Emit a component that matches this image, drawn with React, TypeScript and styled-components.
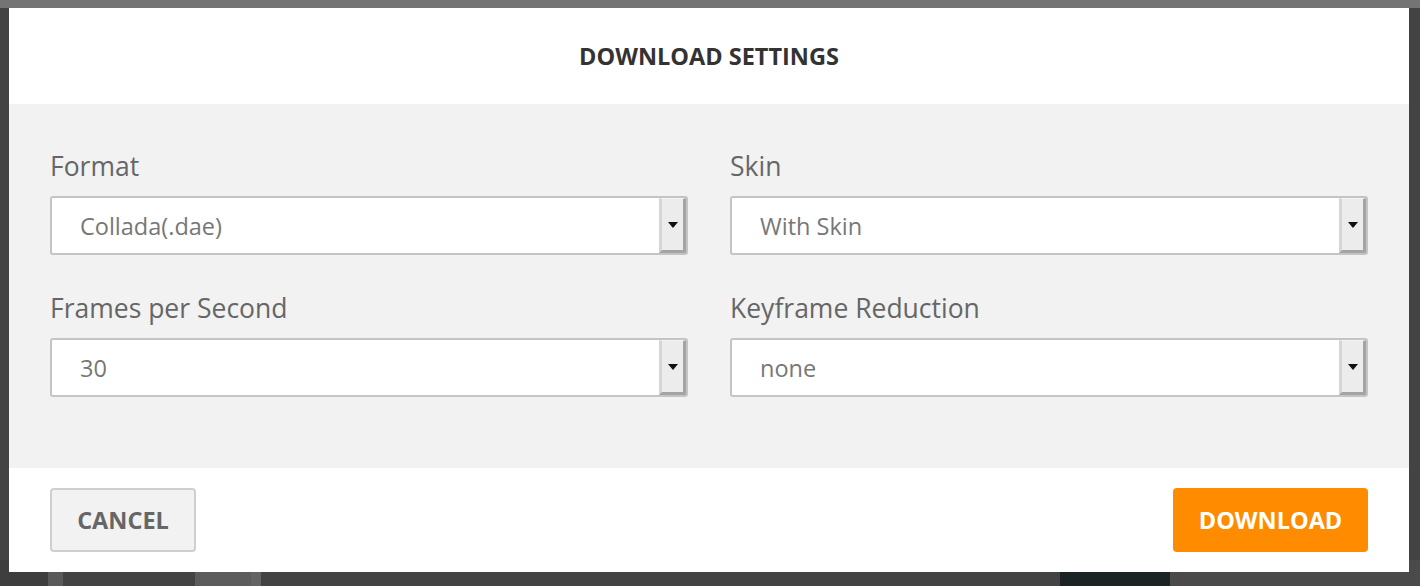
import React from "react";
import styled, { createGlobalStyle } from "styled-components";

const Global = createGlobalStyle`
  html, body { margin: 0; padding: 0; }
  body {
    width: 1420px;
    height: 586px;
    overflow: hidden;
    background: linear-gradient(#747474 0, #747474 8px, #434343 8px);
    font-family: "Open Sans", "Noto Sans", sans-serif;
  }
`;

const Backdrop = styled.div`
  position: relative;
  width: 1420px;
  height: 586px;
  padding: 8px 11px 0 9px;
  box-sizing: border-box;
`;

const Patch = styled.div<{ $l: number; $w: number; $c: string }>`
  position: absolute;
  left: ${(p) => p.$l}px;
  width: ${(p) => p.$w}px;
  top: 560px;
  bottom: 0;
  background: ${(p) => p.$c};
`;

const Modal = styled.div`
  position: relative;
  width: 1400px;
  height: 564px;
  background: #fff;
  display: flex;
  flex-direction: column;
`;

const Header = styled.div`
  height: 96px;
  display: flex;
  align-items: center;
  justify-content: center;
`;

const Title = styled.h2`
  margin: 0;
  font-size: 23.5px;
  font-weight: 700;
  color: #333;
`;

const Body = styled.div`
  height: 364px;
  background: #f2f2f2;
  box-sizing: border-box;
  padding: 45px 41px 0 41px;
  display: grid;
  grid-template-columns: 638px 638px;
  column-gap: 42px;
  row-gap: 36px;
  align-content: start;
`;

const Field = styled.div`
  display: flex;
  flex-direction: column;
`;

const Label = styled.label`
  font-size: 26.5px;
  color: #666;
  line-height: 34px;
  height: 34px;
  margin-bottom: 13px;
`;

const SelectBox = styled.div`
  height: 59px;
  box-sizing: border-box;
  border: 2px solid #c4c4c4;
  border-radius: 3px;
  background: #fff;
  display: flex;
  align-items: stretch;
  overflow: hidden;
`;

const Value = styled.div`
  flex: 1;
  display: flex;
  align-items: center;
  padding-left: 28px;
  font-size: 23.5px;
  color: #777;
`;

const ArrowButton = styled.div`
  width: 27px;
  box-sizing: border-box;
  background: #ececec;
  border-left: 3px solid #d6d6d6;
  border-top: 1px solid #f4f4f4;
  border-right: 3px solid #a4a4a4;
  border-bottom: 3px solid #a4a4a4;
  display: flex;
  align-items: center;
  justify-content: center;
`;

const Footer = styled.div`
  flex: 1;
  display: flex;
  align-items: center;
  justify-content: space-between;
  padding: 0 41px;
`;

const Button = styled.button<{ $primary?: boolean }>`
  height: 64px;
  box-sizing: border-box;
  border-radius: 4px;
  font-family: inherit;
  font-size: 23.5px;
  font-weight: 700;
  cursor: pointer;
  padding: 0;
  border: ${(p) => (p.$primary ? "none" : "2px solid #cfcfcf")};
  background: ${(p) => (p.$primary ? "#ff8c00" : "#f2f2f2")};
  color: ${(p) => (p.$primary ? "#fff" : "#666")};
  width: ${(p) => (p.$primary ? "195px" : "146px")};
`;

const Arrow = () => (
  <svg width="10" height="6" viewBox="0 0 10 6">
    <path d="M0 0 H10 L5 6 Z" fill="#111" />
  </svg>
);

const Select = ({ label, value }: { label: string; value: string }) => (
  <Field>
    <Label>{label}</Label>
    <SelectBox>
      <Value>{value}</Value>
      <ArrowButton>
        <Arrow />
      </ArrowButton>
    </SelectBox>
  </Field>
);

export default function App() {
  return (
    <>
      <Global />
      <Backdrop>
        <Patch $l={0} $w={48} $c="#3e3e3e" />
        <Patch $l={48} $w={15} $c="#5a5a5a" />
        <Patch $l={195} $w={56} $c="#5c5c5c" />
        <Patch $l={251} $w={10} $c="#646464" />
        <Patch $l={1060} $w={110} $c="#1b2325" />
        <Patch $l={1170} $w={250} $c="#4a4a4a" />
        <Modal>
          <Header>
            <Title>DOWNLOAD SETTINGS</Title>
          </Header>
          <Body>
            <Select label="Format" value="Collada(.dae)" />
            <Select label="Skin" value="With Skin" />
            <Select label="Frames per Second" value="30" />
            <Select label="Keyframe Reduction" value="none" />
          </Body>
          <Footer>
            <Button>CANCEL</Button>
            <Button $primary>DOWNLOAD</Button>
          </Footer>
        </Modal>
      </Backdrop>
    </>
  );
}
